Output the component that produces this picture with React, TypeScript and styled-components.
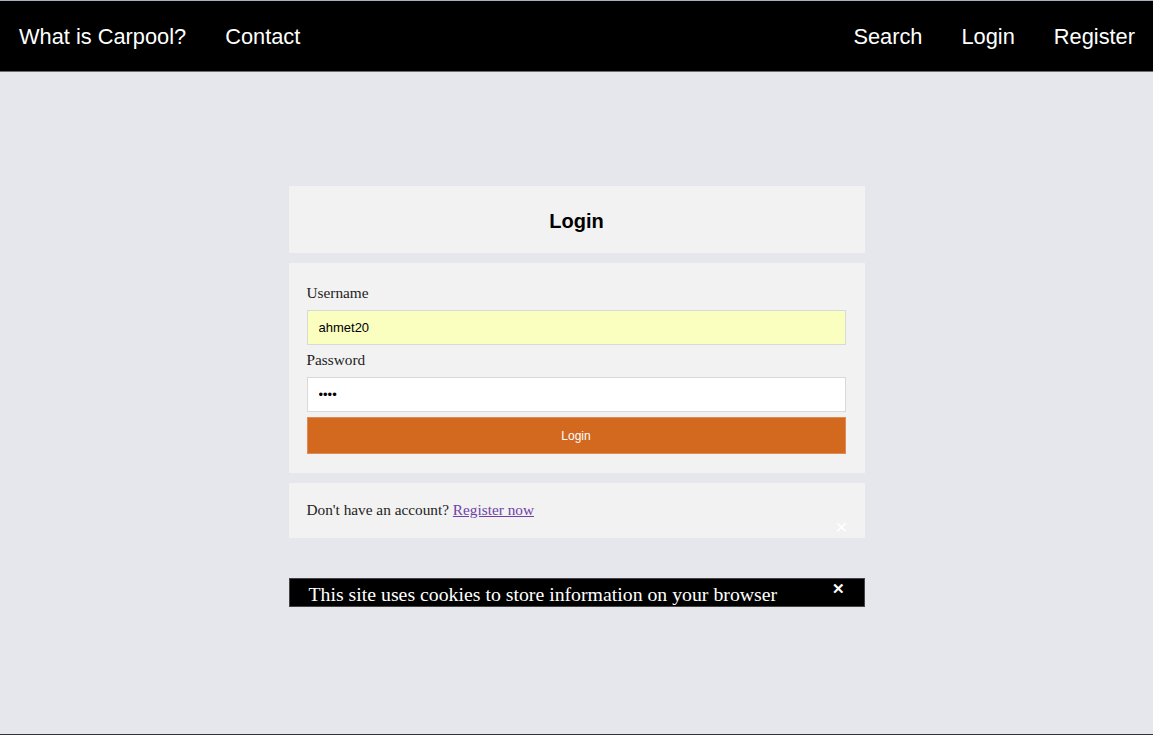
import React from "react";
import styled, { createGlobalStyle } from "styled-components";

const Global = createGlobalStyle`
  html, body { margin: 0; padding: 0; }
  body { background: #e6e7ec; font-family: "Liberation Serif", serif; }
  * { box-sizing: border-box; }
`;

const Page = styled.div`
  height: 735px;
  display: flex;
  flex-direction: column;
  background: #e6e7ec;
  border-top: 1px solid #a9b0bd;
  border-bottom: 1px solid #30343a;
`;

const Nav = styled.nav`
  height: 71px;
  background: #000;
  border-bottom: 1px solid #6e6e6e;
  display: flex;
  align-items: center;
  justify-content: space-between;
  padding: 2px 18px 0 19px;
`;

const NavGroup = styled.div`
  display: flex;
  gap: 39px;
`;

const NavLink = styled.a`
  color: #fff;
  font-family: "Liberation Sans", Arial, sans-serif;
  font-size: 21.8px;
  text-decoration: none;
`;

const Main = styled.main`
  width: 576px;
  margin: 114px auto 0;
  display: flex;
  flex-direction: column;
  gap: 10px;
`;

const Card = styled.div<{ $pad?: string }>`
  background: #f2f2f2;
  padding: ${(p) => p.$pad || "0"};
  position: relative;
`;

const Title = styled.h2`
  margin: 0;
  height: 67px;
  padding-top: 3px;
  display: flex;
  align-items: center;
  justify-content: center;
  font-family: "Liberation Sans", Arial, sans-serif;
  font-size: 20px;
  font-weight: bold;
  color: #000;
`;

const Form = styled.form`
  display: flex;
  flex-direction: column;
`;

const Label = styled.label<{ $mt?: number }>`
  font-family: "Liberation Serif", serif;
  font-size: 15.3px;
  line-height: 18px;
  color: #222;
  margin-top: ${(p) => p.$mt || 0}px;
  margin-bottom: 8px;
`;

const Input = styled.input<{ $fill?: string }>`
  height: 35px;
  width: 100%;
  border: 1px solid #d9d9d9;
  background: ${(p) => p.$fill || "#fff"};
  padding: 0 11px;
  font-family: "Liberation Sans", Arial, sans-serif;
  font-size: 13px;
  color: #000;
  outline: none;
`;

const Button = styled.button`
  margin-top: 5px;
  height: 37px;
  width: 100%;
  border: 1px solid #e08a55;
  background: #d2691e;
  color: #fff;
  font-family: "Liberation Sans", Arial, sans-serif;
  font-size: 12px;
`;

const Text = styled.p`
  margin: 0;
  font-family: "Liberation Serif", serif;
  font-size: 15.3px;
  line-height: 18px;
  color: #222;
`;

const Link = styled.a`
  color: #6f42a8;
  text-decoration: underline;
`;

const FaintClose = styled.span`
  position: absolute;
  right: 17px;
  bottom: 1px;
  color: #fff;
  font-family: "Liberation Sans", Arial, sans-serif;
  font-size: 21px;
  line-height: 20px;
`;

const Cookie = styled.div`
  margin-top: 30px;
  height: 29px;
  background: #000;
  border: 1px solid #444;
  display: flex;
  align-items: center;
  justify-content: space-between;
  padding: 0 19px 0 19px;
`;

const CookieText = styled.span`
  color: #fff;
  font-family: "Liberation Serif", serif;
  font-size: 19.8px;
  line-height: 20px;
  margin-top: 3px;
`;

const CookieClose = styled.span`
  color: #fff;
  font-family: "Liberation Sans", Arial, sans-serif;
  font-size: 15px;
  font-weight: bold;
  line-height: 15px;
  margin-top: -9px;
`;

export default function App() {
  return (
    <>
      <Global />
      <Page>
        <Nav>
          <NavGroup>
            <NavLink href="#">What is Carpool?</NavLink>
            <NavLink href="#">Contact</NavLink>
          </NavGroup>
          <NavGroup>
            <NavLink href="#">Search</NavLink>
            <NavLink href="#">Login</NavLink>
            <NavLink href="#">Register</NavLink>
          </NavGroup>
        </Nav>
        <Main>
          <Card>
            <Title>Login</Title>
          </Card>
          <Card $pad="21px 19px 19px 18px">
            <Form onSubmit={(e) => e.preventDefault()}>
              <Label>Username</Label>
              <Input $fill="#fafebf" defaultValue="ahmet20" />
              <Label $mt={6}>Password</Label>
              <Input type="password" defaultValue="1234" />
              <Button type="submit">Login</Button>
            </Form>
          </Card>
          <Card $pad="18px 19px 19px 18px">
            <Text>
              Don't have an account? <Link href="#">Register now</Link>
            </Text>
            <FaintClose>×</FaintClose>
          </Card>
          <Cookie>
            <CookieText>This site uses cookies to store information on your browser</CookieText>
            <CookieClose>✕</CookieClose>
          </Cookie>
        </Main>
      </Page>
    </>
  );
}
